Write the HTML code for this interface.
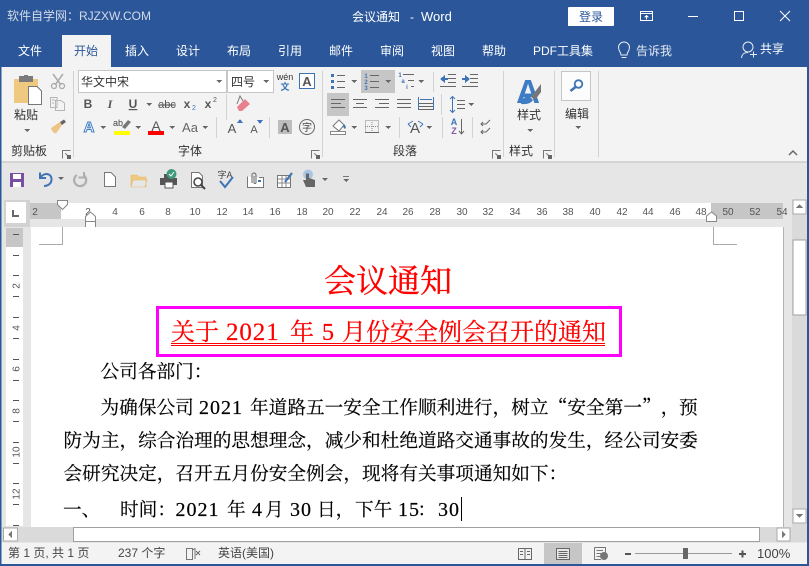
<!DOCTYPE html>
<html lang="zh"><head><meta charset="utf-8"><title>会议通知 - Word</title>
<style>
html,body{margin:0;padding:0;width:809px;height:566px;overflow:hidden;background:#e6e6e6}
svg{display:block;position:absolute;left:0;top:0}
text{font-family:"Liberation Sans","Noto Sans CJK SC",sans-serif;font-size:12px;fill:#444;white-space:pre}
.w{fill:#fff}.c{text-anchor:middle}
.r{font-size:10px;fill:#555;text-anchor:middle}
.d{font-family:"Liberation Serif","Noto Serif CJK SC",serif;font-size:18.67px;fill:#000;stroke:#000;stroke-width:.18}
.n{font-size:20px;letter-spacing:1px}
.z{font-family:"Noto Serif CJK SC",serif}
.b{font-family:"Liberation Sans",sans-serif;font-weight:700;font-size:12px;fill:#555;text-anchor:middle}
.l{stroke:#666;stroke-width:1;fill:none}
.bl{stroke:#3e73b5;stroke-width:1;fill:none}
</style></head><body>
<svg width="809" height="566" viewBox="0 0 809 566" xmlns="http://www.w3.org/2000/svg" shape-rendering="crispEdges">
<defs><path id="dd" d="M-3 0H3L0 3Z" fill="#666"/></defs>
<rect width="809" height="566" fill="#e6e6e6"/>
<!-- title + tabs -->
<rect width="809" height="67" fill="#2b579a"/>
<text x="7" y="20" style="fill:#d3dbe9">软件自学网：RJZXW.COM</text>
<text x="352" y="21" class="w">会议通知</text><text x="410" y="21" class="w">-</text><text x="421" y="21" class="w" style="font-size:13px">Word</text>
<rect x="568" y="7" width="46" height="19" rx="1" fill="#fff"/>
<text x="591" y="21" class="c" style="fill:#2b579a">登录</text>
<g stroke="#fff" fill="none">
<path d="M640.5 11.500H652.500V20.500H640.500ZM640.500 13.500H652.500M646.500 19.500V15.500M644.500 17.500L646.500 15.500L648.500 17.500"/>
<path d="M688 16.500H698"/>
<rect x="734.500" y="11.500" width="9" height="9"/>
<path d="M780 11L790 21M790 11L780 21" shape-rendering="auto"/>
</g>
<rect x="62" y="35" width="49" height="33" fill="#f3f3f3"/>
<g class="w">
<text x="18" y="55" class="w">文件</text><text x="74" y="55" style="fill:#2b579a">开始</text><text x="125" y="55" class="w">插入</text><text x="176" y="55" class="w">设计</text><text x="227" y="55" class="w">布局</text><text x="278" y="55" class="w">引用</text><text x="329" y="55" class="w">邮件</text><text x="380" y="55" class="w">审阅</text><text x="431" y="55" class="w">视图</text><text x="482" y="55" class="w">帮助</text><text x="533" y="55" class="w">PDF工具集</text>
<text x="636" y="55" style="fill:#e3e8f1">告诉我</text><text x="760" y="53" class="w">共享</text></g>
<g stroke="#e8edf5" fill="none" shape-rendering="auto">
<path d="M621 55C621 52 618.500 51 618.500 47.500A5.500 5.500 0 0 1 629.500 47.500C629.500 51 627 52 627 55ZM621.500 57.500H626.500"/>
<circle cx="748" cy="47" r="5"/><path d="M741.500 58C742 54 744 52.500 748 52.500M750 54.500H757M753.500 51.500V57.500"/>
</g>
<!-- ribbon -->
<rect y="67" width="809" height="94" fill="#f3f3f3"/>
<rect y="161" width="809" height="2" fill="#d4d4d4"/>
<g fill="#d2d2d2">
<rect x="73" y="71" width="1" height="86"/><rect x="322" y="71" width="1" height="86"/><rect x="503" y="71" width="1" height="86"/><rect x="554" y="71" width="1" height="86"/><rect x="598" y="71" width="1" height="86"/>
<rect x="226" y="94" width="1" height="26"/><rect x="216" y="117" width="1" height="21"/><rect x="269" y="117" width="1" height="21"/>
<rect x="433" y="72" width="1" height="20"/><rect x="441" y="94" width="1" height="21"/><rect x="399" y="117" width="1" height="21"/><rect x="442" y="117" width="1" height="21"/><rect x="472" y="117" width="1" height="21"/>
</g>
<!-- clipboard -->
<path d="M14 79H38V103H14Z" fill="#efc97f"/>
<rect x="19" y="76" width="14" height="6" fill="#7b7b7b"/><rect x="24" y="75" width="4" height="3" fill="#7b7b7b"/>
<path d="M28.500 86.500H37L41.500 91V104.500H28.500Z" fill="#fff" stroke="#777"/>
<text x="14" y="119" style="fill:#333">粘贴</text><use href="#dd" x="27" y="129"/>
<g shape-rendering="auto">
<path d="M53 74L61 85M63 74L55 85" stroke="#aaa" stroke-width="1.500" fill="none"/><circle cx="54" cy="86" r="2.500" fill="none" stroke="#aaa" stroke-width="1.300"/><circle cx="62" cy="86" r="2.500" fill="none" stroke="#aaa" stroke-width="1.300"/>
<path d="M50.500 97.500H57V107.500H50.500ZM55.500 100.500H60.500L64.500 103V110.500H55.500ZM52 100H55M52 103H54" stroke="#b5b5b5" fill="#f3f3f3"/>
<path d="M51 128L60 122L62 125L56 133.500Q52 133 51 128Z" fill="#eec486"/><path d="M60 122L64 119.500L66 122L62 125Z" fill="#666"/>
</g>
<text x="11" y="155" style="fill:#333">剪贴板</text>
<g fill="none" stroke="#777"><path d="M62.500 158.500V150.500H70.500"/><path d="M65.500 153.500L69 157"/></g><rect x="67" y="155" width="4" height="4" fill="#666"/>
<g fill="none" stroke="#777"><path d="M311.500 158.500V150.500H319.500"/><path d="M314.500 153.500L318 157"/></g><rect x="316" y="155" width="4" height="4" fill="#666"/>
<g fill="none" stroke="#777"><path d="M492.500 158.500V150.500H500.500"/><path d="M495.500 153.500L499 157"/></g><rect x="497" y="155" width="4" height="4" fill="#666"/>
<g fill="none" stroke="#777"><path d="M543.500 158.500V150.500H551.500"/><path d="M546.500 153.500L550 157"/></g><rect x="548" y="155" width="4" height="4" fill="#666"/>
<!-- font -->
<rect x="78.500" y="70.500" width="148" height="22" fill="#fff" stroke="#c6c6c6"/>
<rect x="227.500" y="70.500" width="46" height="22" fill="#fff" stroke="#c6c6c6"/>
<text x="81" y="86" style="fill:#333">华文中宋</text><use href="#dd" x="219" y="80"/>
<text x="231" y="86" style="fill:#333">四号</text><use href="#dd" x="266" y="80"/>
<text x="285" y="80" class="c" style="font-size:9px;fill:#333">wén</text><text x="285" y="90" class="c" style="font-size:9px;fill:#3e73b5;font-weight:700">文</text>
<rect x="299.500" y="73.500" width="15" height="15" fill="#fff" stroke="#3e73b5"/><text x="307" y="86" class="b" style="font-size:13px">A</text>
<text x="88" y="108" class="b">B</text><text x="110" y="108" class="b" style="font-family:'Liberation Serif';font-style:italic;">I</text><text x="133" y="108" class="b" style="text-decoration:underline">U</text><use href="#dd" x="149" y="103"/>
<text x="167" y="108" class="c" style="font-size:11px;fill:#555;text-decoration:line-through">abc</text>
<text x="187" y="108" class="b">x</text><text x="194" y="110" class="c" style="font-size:7px;fill:#3e73b5">2</text>
<text x="208" y="108" class="b">x</text><text x="215" y="102" class="c" style="font-size:7px;fill:#555">2</text>
<g shape-rendering="auto"><path d="M237 107L245 99L250 104L242 111L239 111Z" fill="#e9808e"/><path d="M237 104L240 96L243 101" fill="none" stroke="#777"/></g>
<text x="89" y="132" class="c" style="font-size:15px;font-weight:700;fill:#fff;stroke:#3e7cc4;stroke-width:1" shape-rendering="auto">A</text><use href="#dd" x="103" y="126"/>
<text x="118" y="126" class="c" style="font-size:9px;fill:#444">ab</text><path d="M122 127L128 120L131 122L125 129Z" fill="#777" shape-rendering="auto"/><rect x="114" y="131" width="16" height="4" fill="#ff0"/><use href="#dd" x="138" y="126"/>
<text x="156" y="131" class="c" style="font-size:14px;fill:#555">A</text><rect x="148" y="131" width="16" height="4" fill="#f00"/><use href="#dd" x="172" y="126"/>
<text x="190" y="132" class="c" style="font-size:13px;fill:#666">Aa</text><use href="#dd" x="205" y="126"/>
<text x="232" y="133" class="c" style="font-size:13px;fill:#555">A</text><path d="M237 123H243L240 119Z" fill="#3e73b5"/>
<text x="254" y="133" class="c" style="font-size:11px;fill:#555">A</text><path d="M257 120H263L260 124Z" fill="#3e73b5"/>
<rect x="278" y="120" width="14" height="14" fill="#bdbdbd"/><text x="285" y="132" class="b" style="font-size:13px">A</text>
<circle cx="307" cy="127" r="7.500" fill="none" stroke="#666" shape-rendering="auto"/><text x="307" y="131" class="c" style="font-size:10px;fill:#444">字</text>
<text x="178" y="155" style="fill:#333">字体</text>
<!-- paragraph -->
<rect x="361" y="70" width="34" height="23" fill="#c6c6c6"/>
<rect x="327" y="93" width="22" height="23" fill="#c6c6c6"/>
<g fill="#3e73b5"><rect x="331" y="74" width="3" height="3"/><rect x="331" y="80" width="3" height="3"/><rect x="331" y="86" width="3" height="3"/></g>
<path class="l" d="M337 75.500H345M337 81.500H345M337 87.500H345"/><use href="#dd" x="354" y="80"/>
<text x="366" y="78" class="c" style="font-size:6px;fill:#3e73b5;font-weight:700">1</text><text x="366" y="84" class="c" style="font-size:6px;fill:#3e73b5;font-weight:700">2</text><text x="366" y="90" class="c" style="font-size:6px;fill:#3e73b5;font-weight:700">3</text>
<path class="l" d="M370 75.500H379M370 81.500H379M370 87.500H379"/><use href="#dd" x="388" y="80"/>
<text x="400" y="77" class="c" style="font-size:6px;fill:#3e73b5;font-weight:700">1</text><text x="403" y="83" class="c" style="font-size:6px;fill:#3e73b5;font-weight:700">a</text><text x="407" y="89" class="c" style="font-size:6px;fill:#3e73b5;font-weight:700">i</text>
<path class="l" d="M403 74.500H414M408 80.500H414M411 86.500H414"/><use href="#dd" x="421" y="80"/>
<path class="l" d="M448 74.500H456M448 78.500H456M448 82.500H456M440 86.500H456"/><path d="M440 79L445 75V83Z" fill="#3e73b5"/><rect x="444" y="78" width="4" height="2" fill="#3e73b5"/>
<path class="l" d="M470 74.500H478M470 78.500H478M470 82.500H478M462 86.500H478"/><path d="M470 79L465 75V83Z" fill="#3e73b5"/><rect x="462" y="78" width="4" height="2" fill="#3e73b5"/>
<path class="l" d="M331 99.500H345M331 103.500H341M331 107.500H345"/>
<path class="l" d="M353 99.500H367M356 103.500H364M353 107.500H367"/>
<path class="l" d="M375 99.500H389M379 103.500H389M375 107.500H389"/>
<path class="l" d="M397 99.500H411M397 103.500H411M397 107.500H411"/>
<path class="l" d="M419 103.500H433M419 106.500H433M419 109.500H433"/><path class="bl" d="M418.500 97V110M433.500 97V110M420 99.500H432"/>
<path class="l" d="M457 100.500H465M457 104.500H465M457 108.500H465"/><path class="bl" d="M452.500 97V112M450 99L452.500 96.500L455 99M450 110L452.500 112.500L455 110" shape-rendering="auto"/><use href="#dd" x="471" y="103"/>
<g shape-rendering="auto"><path d="M333 126L339 120L344 125L339 131Z" fill="#fff" stroke="#777"/><path d="M344 124Q347 127 345 129Q342 127 344 124Z" fill="#3e73b5"/></g><rect x="330.500" y="131.500" width="15" height="3" fill="#fff" stroke="#888"/><use href="#dd" x="354" y="126"/>
<g stroke="#888" stroke-dasharray="1 1" fill="none"><rect x="365.500" y="120.500" width="13" height="12"/><path d="M372 120V133M365 126.500H379"/></g><path d="M365 132.500H379" stroke="#666"/><use href="#dd" x="388" y="126"/>
<text x="415" y="133" class="c" style="font-size:15px;fill:#555">A</text><path class="bl" d="M408 124L413 121M408 124L411 127M423 124L418 121M423 124L420 127" shape-rendering="auto"/><use href="#dd" x="429" y="126"/>
<text x="454" y="125" class="c" style="font-size:9px;font-weight:700;fill:#3e73b5">A</text><text x="454" y="134" class="c" style="font-size:9px;font-weight:700;fill:#8a55a8">Z</text><path class="l" d="M461.500 119V133M459 131L461.500 134L464 131" shape-rendering="auto"/>
<path class="l" d="M490 120L486 124H481M483 122L481 124L483 126M490 128L486 132H481M483 130L481 132L483 134" shape-rendering="auto"/>
<text x="393" y="155" style="fill:#333">段落</text>
<!-- styles -->
<text x="528" y="103" class="c" style="font-size:33px;font-weight:700;fill:#3e7cc4">A</text>
<path d="M531 97L541 84V92L535 100Z" fill="#777" shape-rendering="auto"/><path d="M521 104Q522 97 529 96L533 100Q530 105 521 104Z" fill="#3e7cc4" shape-rendering="auto"/>
<text x="517" y="119" style="fill:#333">样式</text><use href="#dd" x="530" y="129"/>
<text x="509" y="155" style="fill:#333">样式</text>
<!-- editing -->
<rect x="561.500" y="71.500" width="29" height="29" fill="#fcfcfc" stroke="#c6c6c6"/>
<g shape-rendering="auto" fill="none" stroke="#3e73b5"><circle cx="578.500" cy="84" r="3.800" stroke-width="1.800"/><path d="M575.500 87L570.500 91" stroke-width="2.500"/></g>
<text x="565" y="118" style="fill:#333">编辑</text><use href="#dd" x="578" y="126"/>
<path d="M789 155L793 151L797 155" stroke="#666" stroke-width="1.500" fill="none" shape-rendering="auto"/>
<!-- QAT -->
<g shape-rendering="auto">
<rect x="10" y="173" width="14" height="14" fill="#7a4fa3"/><rect x="13" y="174" width="8" height="5" fill="#fff"/><rect x="13" y="182" width="8" height="5" fill="#fff"/>
<path d="M40 172.500V178H46M40 178C44 172 52 173 51.500 180C51 185 46 186 44 186" fill="none" stroke="#3e73b5" stroke-width="2"/><use href="#dd" x="61" y="177"/>
<path d="M84 175.500A6 6 0 1 1 77 175" fill="none" stroke="#aeaeae" stroke-width="2.200"/><path d="M84 172V177.500H78.500" fill="none" stroke="#aeaeae" stroke-width="2"/>
<path d="M104.500 172.500H111L115.500 177V186.500H104.500Z" fill="#fff" stroke="#777"/>
<path d="M131 175V187H146V177H139L137 175ZM133 180H147L145 187H131Z" fill="#efc97f" stroke="#e6b96a" stroke-width=".6"/>
<path d="M160 178H177V185H172V188H165V185H160Z" fill="#555"/><rect x="164" y="174" width="9" height="4" fill="#555"/><rect x="165" y="182" width="8" height="6" fill="#fff" stroke="#555"/><circle cx="171.500" cy="174" r="5" fill="#3f9a7c"/><path d="M169 174L171 176L174 172" stroke="#fff" fill="none"/>
<path d="M191.500 172.500H199L202.500 176V187.500H191.500Z" fill="#fff" stroke="#777"/><circle cx="198" cy="182" r="4" fill="#fff" stroke="#444" stroke-width="1.500"/><path d="M201 185L205 189" stroke="#444" stroke-width="2"/>
<text x="225" y="178" class="c" style="font-size:9px;fill:#444">字A</text><path d="M220 181L225 187L233 177" stroke="#3e73b5" stroke-width="2" fill="none"/>
<path d="M247.500 176.500V187.500H263.500V177.500H259" fill="#fff" stroke="#777"/><path d="M252 183V175A2 2 0 0 1 256 175V183A1.200 1.200 0 0 1 254 183V176" fill="none" stroke="#666"/><rect x="258" y="180" width="3" height="2" fill="#3e73b5"/>
<rect x="277.500" y="175.500" width="13" height="12" fill="#fff" stroke="#777"/><path d="M278 179H290M282 176V187M286 176V187M278 183H290" stroke="#888"/><path d="M285 182L292 173" stroke="#3e73b5" stroke-width="2.200"/>
<circle cx="308" cy="174.500" r="5" fill="#a9c5e5"/><path d="M306 173.500V180H303L306 187H315V180L309 178V173.500Z" fill="#666"/><use href="#dd" x="325" y="178"/>
</g>
<rect x="343" y="176" width="6" height="1" fill="#777"/><use href="#dd" x="346" y="179"/>
<!-- ruler -->
<rect x="4" y="200" width="26" height="27" fill="#d2d2d2"/><rect x="6" y="202" width="20" height="21" fill="#fff"/>
<path d="M13 210V216H19" stroke="#666" stroke-width="2" fill="none"/>
<rect x="30" y="203" width="753" height="16" fill="#fff"/><rect x="30" y="203" width="31" height="16" fill="#c6c6c6"/><rect x="711" y="203" width="72" height="16" fill="#c6c6c6"/>
<text class="r" x="35" y="215">2</text><text class="r" x="88" y="215">2</text><text class="r" x="115" y="215">4</text><text class="r" x="142" y="215">6</text><text class="r" x="168" y="215">8</text><text class="r" x="195" y="215">10</text><text class="r" x="222" y="215">12</text><text class="r" x="248" y="215">14</text><text class="r" x="275" y="215">16</text><text class="r" x="302" y="215">18</text><text class="r" x="328" y="215">20</text><text class="r" x="355" y="215">22</text><text class="r" x="382" y="215">24</text><text class="r" x="408" y="215">26</text><text class="r" x="435" y="215">28</text><text class="r" x="462" y="215">30</text><text class="r" x="488" y="215">32</text><text class="r" x="515" y="215">34</text><text class="r" x="542" y="215">36</text><text class="r" x="568" y="215">38</text><text class="r" x="595" y="215">40</text><text class="r" x="622" y="215">42</text><text class="r" x="648" y="215">44</text><text class="r" x="675" y="215">46</text><text class="r" x="701" y="215">48</text><text class="r" x="728" y="215">50</text><text class="r" x="755" y="215">52</text><text class="r" x="782" y="215">54</text>
<g fill="#fff" stroke="#888" shape-rendering="auto">
<path d="M57.500 200.500H67.500V204.500L62.500 209.500L57.500 204.500Z"/>
<path d="M85.500 221.500V216.500L90.500 212L95.500 216.500V227.500H85.500ZM85.500 221.500H95.500"/>
<path d="M706.500 221.500V216L711.500 212L716.500 216V221.500Z"/>
</g>
<!-- left ruler -->
<rect x="6" y="228" width="17" height="298" fill="#fff"/><rect x="6" y="228" width="17" height="19" fill="#c6c6c6"/>
<g fill="#555"><rect x="13" y="234" width="6" height="1"/><rect x="13" y="255" width="6" height="1"/><rect x="13" y="275" width="6" height="1"/><rect x="13" y="296" width="6" height="1"/><rect x="13" y="317" width="6" height="1"/><rect x="13" y="338" width="6" height="1"/><rect x="13" y="359" width="6" height="1"/><rect x="13" y="380" width="6" height="1"/><rect x="13" y="400" width="6" height="1"/><rect x="13" y="421" width="6" height="1"/><rect x="13" y="442" width="6" height="1"/><rect x="13" y="463" width="6" height="1"/><rect x="13" y="483" width="6" height="1"/><rect x="13" y="504" width="6" height="1"/><rect x="13" y="525" width="6" height="1"/></g>
<text class="r" transform="translate(19.500 286) rotate(-90)">2</text><text class="r" transform="translate(19.500 328) rotate(-90)">4</text><text class="r" transform="translate(19.500 369) rotate(-90)">6</text><text class="r" transform="translate(19.500 411) rotate(-90)">8</text><text class="r" transform="translate(19.500 452) rotate(-90)">10</text><text class="r" transform="translate(19.500 494) rotate(-90)">12</text>
<!-- page -->
<rect x="31" y="227" width="752" height="300" fill="#fff"/><rect x="783" y="227" width="1" height="300" fill="#b4b4b4"/>
<path d="M62.500 227V244.500H39M713.500 227V244.500H737" fill="none" stroke="#aaa"/>
<text x="388" y="292" class="z" text-anchor="middle" style="font-size:32px;fill:#f00;stroke:#f00;stroke-width:.35">会议通知</text>
<rect x="157.500" y="307.500" width="463" height="48" fill="none" stroke="#f0f" stroke-width="3"/>
<text y="340" style="font-family:'Liberation Serif','Noto Serif CJK SC',serif;font-size:24px;fill:#f00;stroke:#f00;stroke-width:.2"><tspan x="171">关于</tspan><tspan x="226" style="font-size:25px;letter-spacing:.9px">2021</tspan><tspan x="290">年</tspan><tspan x="322">5</tspan><tspan x="342">月份安全例会召开的通知</tspan></text>
<rect x="171" y="343" width="434" height="1" fill="#f00"/><rect x="171" y="345" width="434" height="1" fill="#f00"/>
<text x="100.500" y="378" class="d">公司各部门<tspan class="z">：</tspan></text>
<text y="414" class="d"><tspan x="100.500">为确保公司</tspan><tspan x="199" class="n">2021</tspan><tspan x="250">年道路五一安全工作顺利进行，树立</tspan><tspan x="548.700" class="z">“</tspan><tspan x="567.400">安全第一</tspan><tspan x="642" class="z">”</tspan><tspan x="660.700">，</tspan><tspan x="679">预</tspan></text>
<text x="63.500" y="447" class="d">防为主，综合治理的思想理念，减少和杜绝道路交通事故的发生，经公司安委</text>
<text x="63.500" y="480" class="d">会研究决定，召开五月份安全例会，现将有关事项通知如下：</text>
<text y="516" class="d"><tspan x="63">一、</tspan><tspan x="120">时间：</tspan><tspan x="175.500" class="n">2021</tspan><tspan x="227">年</tspan><tspan x="252" style="font-size:20px">4</tspan><tspan x="265">月</tspan><tspan x="290" class="n">30</tspan><tspan x="317">日，</tspan><tspan x="355">下午</tspan><tspan x="398" class="n">15</tspan><tspan x="417.500">：</tspan><tspan x="438" class="n">30</tspan></text>
<rect x="461" y="497" width="1" height="24" fill="#000"/>
<!-- v scrollbar -->
<rect x="792" y="200" width="15" height="327" fill="#dadada"/>
<rect x="793" y="200" width="13" height="14" fill="#fff" stroke="#aaa" stroke-width=".6"/><path d="M796 208H803L799.500 204Z" fill="#777"/>
<rect x="793" y="240" width="13" height="75" fill="#fff" stroke="#a0a0a0"/>
<rect x="793" y="509" width="13" height="14" fill="#fff" stroke="#aaa" stroke-width=".6"/><path d="M796 514H803L799.500 518Z" fill="#777"/>
<!-- h scrollbar -->
<rect x="2" y="527" width="805" height="15" fill="#dadada"/>
<rect x="3.500" y="528" width="14" height="13" fill="#fff" stroke="#aaa" stroke-width=".6"/><path d="M8 534.500L12 531V538Z" fill="#777"/>
<rect x="73.500" y="527.500" width="686" height="14" fill="#fff" stroke="#a0a0a0"/>
<rect x="777" y="528" width="13" height="13" fill="#fff" stroke="#aaa" stroke-width=".6"/><path d="M786 534.500L782 531V538Z" fill="#777"/>
<!-- status -->
<rect y="543" width="809" height="21" fill="#f3f3f3"/>
<rect x="544" y="543" width="38" height="21" fill="#c6c6c6"/>
<text x="8" y="557" style="fill:#444">第 1 页, 共 1 页</text>
<text x="118" y="557">237 个字</text>
<path d="M186.500 548.500H192.500V559.500H186.500ZM192.500 550L195 548.500V559" fill="none" stroke="#777"/><path d="M196 551L200 555M200 551L196 555" stroke="#666" fill="none" shape-rendering="auto"/>
<text x="218" y="557">英语(美国)</text>
<path d="M518.500 548.500H531.500V559.500H518.500ZM525 548.500V559.500M520 551.500H523M520 554.500H523M527 551.500H530M527 554.500H530" fill="none" stroke="#666"/>
<path d="M556.500 548.500H569.500V559.500H556.500ZM558.500 551.500H567.500M558.500 553.500H567.500M558.500 555.500H567.500M558.500 557.500H567.500" fill="#e6e6e6" stroke="#666"/>
<path d="M594.500 547.500H605.500V555M594.500 547.500V559.500H601M596.500 550.500H603M596.500 553.500H601M596.500 556.500H600" fill="none" stroke="#777"/><circle cx="604" cy="556" r="4" fill="#777" shape-rendering="auto"/>
<rect x="625" y="553" width="6" height="2" fill="#555"/><rect x="635" y="553" width="97" height="1" fill="#999"/><rect x="683" y="548" width="5" height="11" fill="#666"/>
<rect x="739" y="553" width="7" height="2" fill="#555"/><rect x="741.500" y="550.500" width="2" height="7" fill="#555"/>
<text x="757" y="558" style="font-size:13px;fill:#444">100%</text>
<!-- window frame -->
<rect x="0" y="67" width="1.500" height="499" fill="#2b579a"/><rect x="807" y="67" width="2" height="499" fill="#2b579a"/><rect y="564" width="809" height="2" fill="#2b579a"/>
</svg>
</body></html>
